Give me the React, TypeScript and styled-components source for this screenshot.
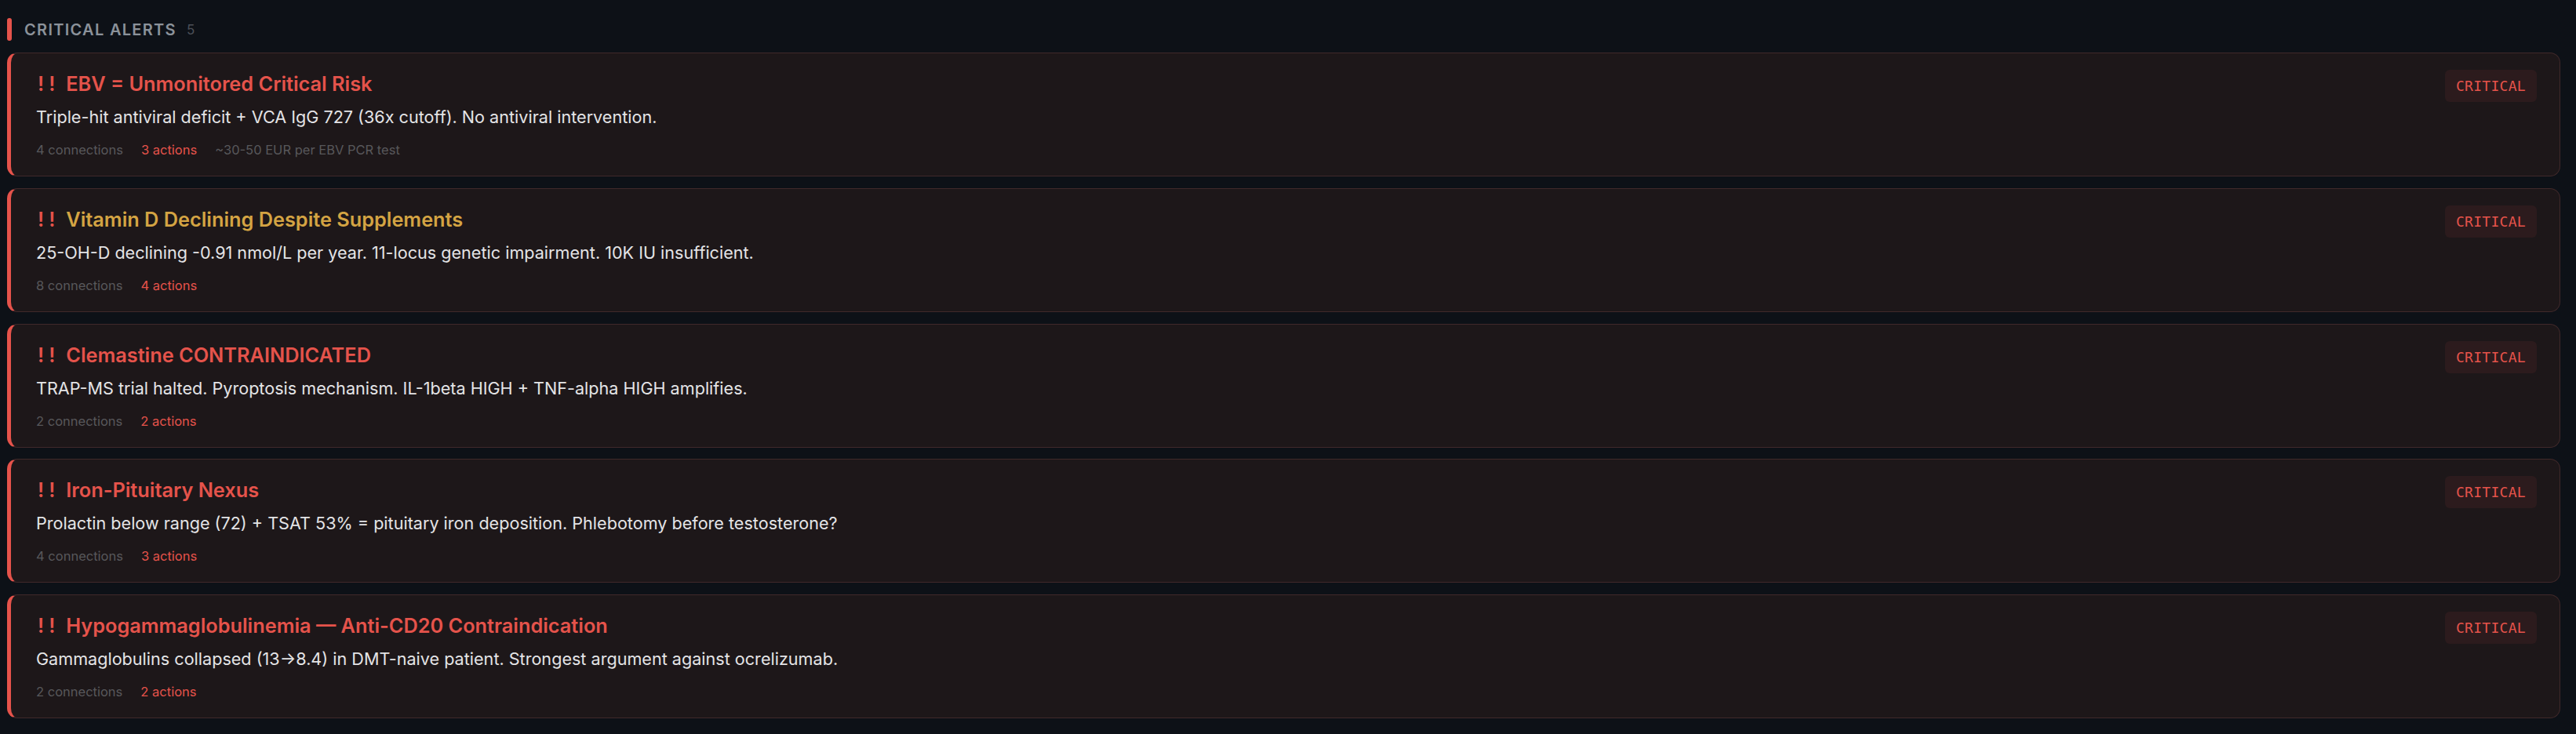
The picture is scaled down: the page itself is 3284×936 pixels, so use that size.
import React from "react";
import styled, { createGlobalStyle } from "styled-components";

type Alert = {
    title: string;
    tone: "red" | "gold";
    text: string;
    connections: number;
    actions: number;
    cost?: string;
};

const alerts: Alert[] = [
    {
        title: "EBV = Unmonitored Critical Risk",
        tone: "red",
        text: "Triple-hit antiviral deficit + VCA IgG 727 (36x cutoff). No antiviral intervention.",
        connections: 4,
        actions: 3,
        cost: "~30-50 EUR per EBV PCR test",
    },
    {
        title: "Vitamin D Declining Despite Supplements",
        tone: "gold",
        text: "25-OH-D declining -0.91 nmol/L per year. 11-locus genetic impairment. 10K IU insufficient.",
        connections: 8,
        actions: 4,
    },
    {
        title: "Clemastine CONTRAINDICATED",
        tone: "red",
        text: "TRAP-MS trial halted. Pyroptosis mechanism. IL-1beta HIGH + TNF-alpha HIGH amplifies.",
        connections: 2,
        actions: 2,
    },
    {
        title: "Iron-Pituitary Nexus",
        tone: "red",
        text: "Prolactin below range (72) + TSAT 53% = pituitary iron deposition. Phlebotomy before testosterone?",
        connections: 4,
        actions: 3,
    },
    {
        title: "Hypogammaglobulinemia \u2014 Anti-CD20 Contraindication",
        tone: "red",
        text: "Gammaglobulins collapsed (13\u21928.4) in DMT-naive patient. Strongest argument against ocrelizumab.",
        connections: 2,
        actions: 2,
    },
];

export default function App() {
    return (
        <>
            <GlobalStyle />
            <Page>
                <SectionHeader>
                    <Bar />
                    <HeaderLabel>Critical Alerts</HeaderLabel>
                    <Count>{alerts.length}</Count>
                </SectionHeader>
                <List>
                    {alerts.map((a) => (
                        <Card key={a.title}>
                            <Body>
                                <Title>
                                    <Bang>!!</Bang>
                                    <TitleText $tone={a.tone}>{a.title}</TitleText>
                                </Title>
                                <Text>{a.text}</Text>
                                <Meta>
                                    <span>{a.connections} connections</span>
                                    <Actions>{a.actions} actions</Actions>
                                    {a.cost && <span>{a.cost}</span>}
                                </Meta>
                            </Body>
                            <Badge>CRITICAL</Badge>
                        </Card>
                    ))}
                </List>
            </Page>
        </>
    );
}

const GlobalStyle = createGlobalStyle`
    html, body {
        margin: 0;
        background: #0d1117;
    }
    body {
        font-family: Inter, "Noto Sans", sans-serif;
    }
`;

const Page = styled.div`
    padding: 23px 20px 0 9px;
    box-sizing: border-box;
    min-height: 936px;
    background: #0d1117;
`;

const SectionHeader = styled.div`
    display: flex;
    align-items: center;
    height: 29px;
    margin-bottom: 15px;
`;

const Bar = styled.span`
    width: 6px;
    height: 29px;
    border-radius: 3px;
    background: #e5534b;
    margin-right: 16px;
`;

const HeaderLabel = styled.h2`
    margin: 0;
    font-size: 20px;
    font-weight: 600;
    letter-spacing: 1.3px;
    text-transform: uppercase;
    color: #8b929a;
`;

const Count = styled.span`
    margin-left: 13px;
    font-size: 17px;
    color: #4b5058;
`;

const List = styled.div`
    display: flex;
    flex-direction: column;
    gap: 14.75px;
`;

const Card = styled.div`
    display: flex;
    align-items: flex-start;
    height: 158px;
    box-sizing: border-box;
    background: #1d1719;
    border: 1px solid #40292a;
    border-left: 5px solid #e5534b;
    border-radius: 13px;
    padding: 24px 29px 24px 32px;
`;

const Body = styled.div`
    flex: 1;
    display: flex;
    flex-direction: column;
`;

const Title = styled.div`
    display: flex;
    align-items: baseline;
    font-size: 25.3px;
    line-height: 29px;
    font-weight: 600;
`;

const Bang = styled.span`
    color: #e5534b;
    letter-spacing: 6px;
    margin-left: 2px;
    margin-right: 8px;
`;

const TitleText = styled.span<{ $tone: "red" | "gold" }>`
    color: ${(p) => (p.$tone === "gold" ? "#d4a443" : "#e5534b")};
`;

const Text = styled.p`
    margin: 13px 0 0;
    font-size: 21.6px;
    line-height: 30px;
    color: #e4e4e6;
`;

const Meta = styled.div`
    display: flex;
    gap: 23px;
    margin-top: 17px;
    font-size: 16.5px;
    line-height: 21px;
    color: #58585b;
`;

const Actions = styled.span`
    color: #e5534b;
`;

const Badge = styled.span`
    margin-top: -3px;
    padding: 10px 14px;
    border-radius: 6px;
    background: #2c1b1d;
    color: #e5534b;
    font-family: "DejaVu Sans Mono", "Liberation Mono", monospace;
    font-size: 18px;
    line-height: 21px;
    letter-spacing: 0.3px;
`;
